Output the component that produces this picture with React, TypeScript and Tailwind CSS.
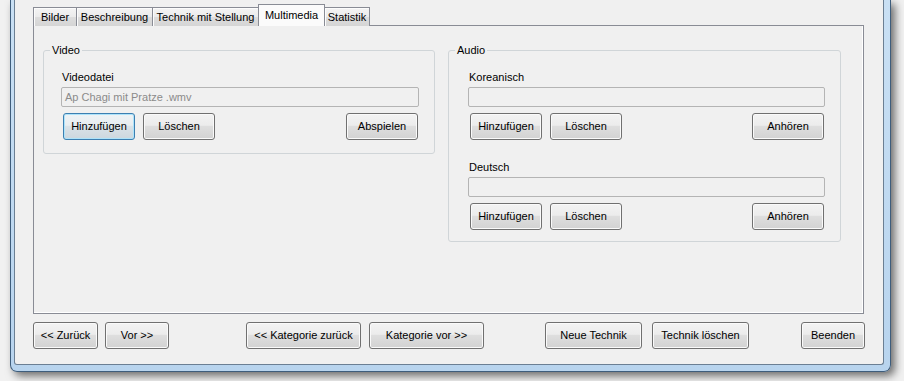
import React from "react";

const btn =
  "h-[27px] shrink-0 rounded-[3px] border border-[#707070] bg-[linear-gradient(to_bottom,#f3f3f3_0%,#ececec_45%,#dedede_50%,#d2d2d2_100%)] shadow-[inset_0_0_0_1px_#fafafa] text-[11px] text-black flex items-center justify-center";
const btnFocus =
  "h-[27px] shrink-0 rounded-[3px] border border-[#3c7fb1] bg-[linear-gradient(to_bottom,#eef3f6_0%,#e8edf0_45%,#d9e2e8_50%,#cdd7de_100%)] shadow-[inset_0_0_0_1px_#aee3fa] text-[11px] text-black flex items-center justify-center";
const field =
  "h-[20px] w-full rounded-[2px] border border-[#b4b4b4] bg-[#f0f0f0] pl-[3px] text-[11px] leading-[18px] text-[#8b8b8b]";

function Tabs() {
  const tab =
    "h-[19px] -ml-px border border-b-0 border-[#898c95] bg-[linear-gradient(to_bottom,#f4f4f4_0%,#ebebeb_50%,#dddddd_50%,#d5d5d5_100%)] shadow-[inset_1px_1px_0_#fcfcfc] flex items-center justify-center text-[11px] leading-none pt-px";
  return (
    <div className="relative z-10 flex h-[22px] items-end">
      <div className={`${tab} ml-0 w-[44px]`}>Bilder</div>
      <div className={`${tab} w-[77px]`}>Beschreibung</div>
      <div className={`${tab} w-[107px]`}>Technik mit Stellung</div>
      <div className="-ml-px flex h-[22px] w-[67px] items-start justify-center border border-b-0 border-[#898c95] bg-[#fbfbfb] pt-[5px] text-[11px] leading-none">
        Multimedia
      </div>
      <div className={`${tab} w-[46px]`}>Statistik</div>
    </div>
  );
}

function Group({ title, className, children }: { title: string; className: string; children: React.ReactNode }) {
  return (
    <fieldset className={`rounded-[3px] border border-[#d0d5d8] ${className}`}>
      <legend className="ml-[6px] px-[2px] text-[11px] leading-[13px]">{title}</legend>
      {children}
    </fieldset>
  );
}

function FileRow({
  label,
  value,
  action,
  focus,
  top,
}: {
  label: string;
  value: string;
  action: string;
  focus?: boolean;
  top: string;
}) {
  return (
    <div className={top}>
      <div className="ml-px text-[11px] leading-[13px]">{label}</div>
      <div className={`${field} mt-[3px]`}>{value}</div>
      <div className="mt-[6px] flex items-center justify-between">
        <div className="ml-[2px] flex gap-[8px]">
          <div className={`${focus ? btnFocus : btn} w-[72px]`}>Hinzufügen</div>
          <div className={`${btn} w-[72px]`}>Löschen</div>
        </div>
        <div className={`${btn} mr-px w-[72px]`}>{action}</div>
      </div>
    </div>
  );
}

export default function App() {
  return (
    <div className="h-[381px] w-[904px] overflow-hidden bg-[#f1f1f1] pl-[10px] font-['Liberation_Sans',Arial,sans-serif] text-[11px] text-black">
      <div className="h-[372px] w-[881px] rounded-b-[7px] border border-t-0 border-[#3e5d7c] bg-[linear-gradient(to_bottom,#c9e0f4,#b8d4ee)] pb-[6px] pl-[3px] pr-[6px] shadow-[4px_4px_9px_rgba(0,0,0,0.55)]">
        <div className="h-full rounded-b-[3px] border border-t-0 border-[#6b7f93] bg-[#f0f0f0] pl-[18px] pt-[4px]">
          <Tabs />
          <div className="-mt-px flex h-[289px] w-[831px] items-start border border-[#898c95] bg-[#f0f0f0] pl-[9px] pt-[18px] shadow-[inset_-1px_-1px_0_#ffffff]">
            <Group title="Video" className="w-[392px]">
              <div className="pb-[13px] pl-[17px] pr-[15px]">
                <FileRow label="Videodatei" value="Ap Chagi mit Pratze .wmv" action="Abspielen" focus top="mt-[14px]" />
              </div>
            </Group>
            <Group title="Audio" className="ml-[13px] w-[393px]">
              <div className="pb-[11px] pl-[19px] pr-[15px]">
                <FileRow label="Koreanisch" value="" action="Anhören" top="mt-[14px]" />
                <FileRow label="Deutsch" value="" action="Anhören" top="mt-[21px]" />
              </div>
            </Group>
          </div>
          <div className="mt-[8px] flex items-center">
            <div className={`${btn} w-[65px]`}>&lt;&lt; Zurück</div>
            <div className={`${btn} ml-[7px] w-[64px]`}>Vor &gt;&gt;</div>
            <div className={`${btn} ml-[77px] w-[115px]`}>&lt;&lt; Kategorie zurück</div>
            <div className={`${btn} ml-[8px] w-[115px]`}>Kategorie vor &gt;&gt;</div>
            <div className={`${btn} ml-[61px] w-[97px]`}>Neue Technik</div>
            <div className={`${btn} ml-[10px] w-[97px]`}>Technik löschen</div>
            <div className={`${btn} ml-[52px] w-[64px]`}>Beenden</div>
          </div>
        </div>
      </div>
    </div>
  );
}
